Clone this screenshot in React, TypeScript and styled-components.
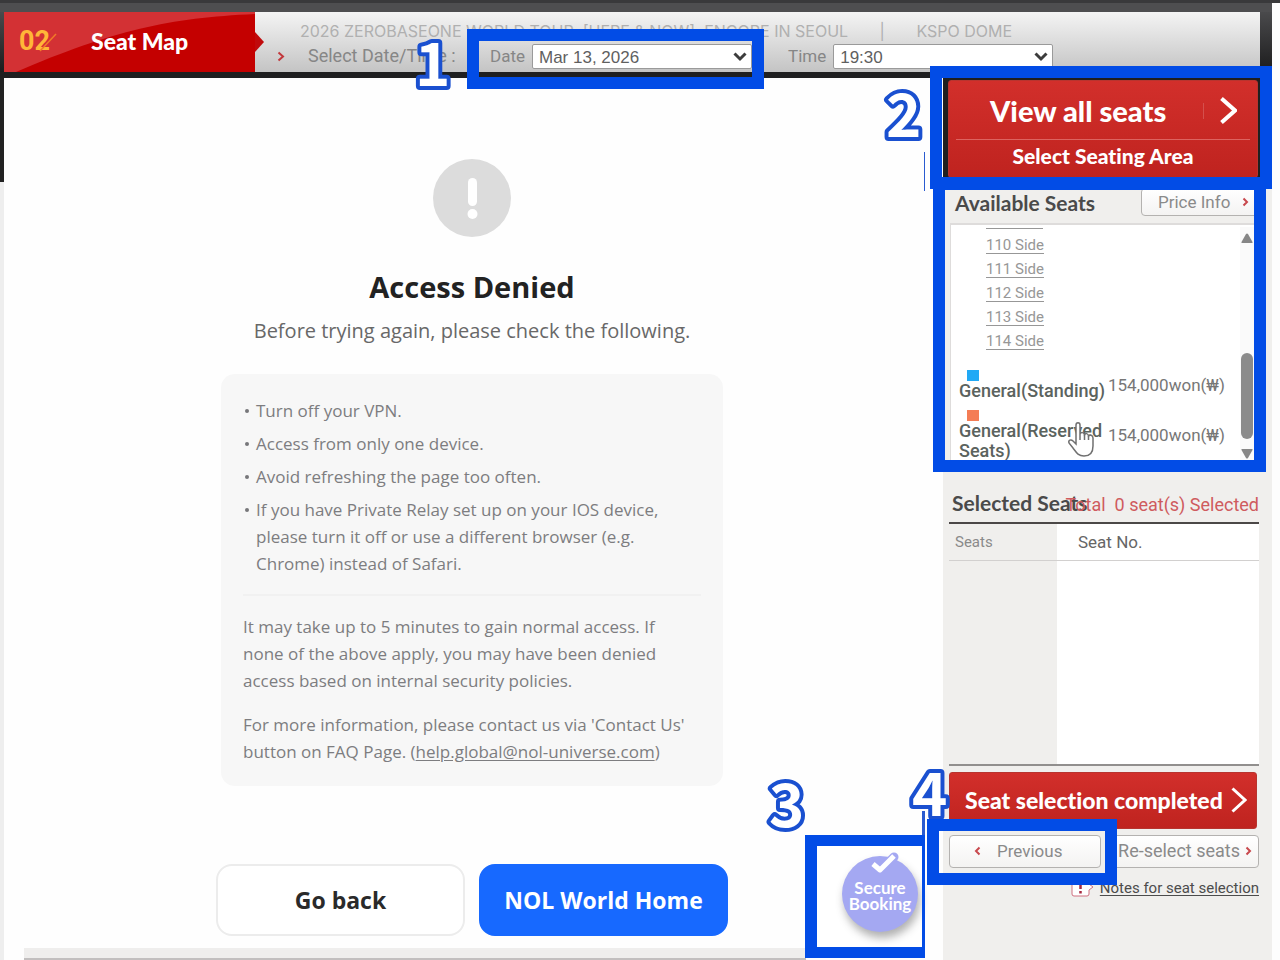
import React from 'react';
import styled, { createGlobalStyle } from 'styled-components';

const gothic = "Lato, 'Liberation Sans', sans-serif";
const ui = "Roboto, 'Noto Sans CJK KR', sans-serif";
const body = "'Open Sans', 'Noto Sans', sans-serif";
const markBlue = '#024ce6';

const GlobalStyle = createGlobalStyle`
  *, *::before, *::after { box-sizing: border-box; }
  body { margin: 0; background: #fdfdfd; font-family: ${ui}; font-variant-ligatures: none; }
  h1, h2, p, ul { margin: 0; padding: 0; }
  ul { list-style: none; }
  button { font: inherit; cursor: pointer; font-variant-ligatures: none; }
`;

/* ---------- page frame ---------- */

const Page = styled.div`
  display: flex;
  flex-direction: column;
  min-height: 100vh;
  border-top: 3px solid #39393b;
  padding-right: 8px;
  overflow: hidden;
`;

const TopStrip = styled.div`
  height: 9px;
  background: #4e4e50;
`;

const Header = styled.header`
  display: flex;
  height: 66px;
  padding: 0 12px 0 4px;
  border-bottom: 6px solid #1f1f20;
  background: linear-gradient(#4a4a4c, #1c1c1d);
`;

const Body = styled.div`
  display: flex;
  flex: 1;
  padding-left: 4px;
  background: linear-gradient(#222 104px, #eeeeee 104px);
`;

/* ---------- callouts drawn over the page ---------- */

const Target = styled.div`
  position: relative;
`;

const Frame = styled.div<{ $inset: string; $width?: string }>`
  position: absolute;
  inset: ${p => p.$inset};
  border: solid ${markBlue};
  border-width: ${p => p.$width ?? '12px'};
  pointer-events: none;
  z-index: 2;
`;

const MarkBox = styled.svg<{ $top: number; $left: number }>`
  position: absolute;
  top: ${p => p.$top}px;
  left: ${p => p.$left}px;
  width: 48px;
  height: 60px;
  z-index: 1;
  pointer-events: none;
  text {
    font: 700 60px 'Noto Sans CJK KR', sans-serif;
    fill: #fff;
    stroke: #1a50d0;
    stroke-width: 8px;
    stroke-linejoin: round;
    paint-order: stroke fill;
  }
`;

const Mark = ({ top, left, children }: { top: number; left: number; children: string }) => (
  <MarkBox $top={top} $left={left}>
    <text x="6" y="52">
      {children}
    </text>
  </MarkBox>
);

const Rule = styled.div<{ $top: number; $left: number; $width: number; $height: number }>`
  position: absolute;
  top: ${p => p.$top}px;
  left: ${p => p.$left}px;
  width: ${p => p.$width}px;
  height: ${p => p.$height}px;
  background: #2a5bd0;
`;

/* ---------- header ---------- */

const Step = styled.div`
  position: relative;
  display: flex;
  align-items: center;
  flex: 0 0 251px;
  padding: 0 0 2px 15px;
  background: #c40000;
  font-family: ${gothic};
  font-weight: 900;
`;

const Swoosh = styled.svg`
  position: absolute;
  inset: 0;
  width: 100%;
  height: 100%;
`;

const StepArrow = styled.svg`
  position: absolute;
  left: 100%;
  top: 20px;
  width: 9px;
  height: 20px;
`;

const StepNumber = styled.span`
  position: relative;
  width: 72px;
  font: 700 27px/30px ${ui};
  color: #ffb638;
`;

const StepSlash = styled.svg`
  position: absolute;
  left: 18px;
  top: 4px;
  width: 20px;
  height: 22px;
`;

const StepName = styled.span`
  position: relative;
  font-size: 23px;
  line-height: 30px;
  color: #fff;
`;

const Info = styled.div`
  flex: 1;
  min-width: 0;
  padding: 8px 0 0 22px;
  background: linear-gradient(#f4f4f4, #c4c4c4);
`;

const Show = styled.div`
  padding-left: 23px;
  font: 16px/22px Inter, ${ui};
  color: #b0b0b0;
  white-space: pre;
`;

const Pickers = styled.div`
  display: flex;
  align-items: center;
  height: 28px;
  font-size: 17px;
  line-height: 26px;
  color: #868686;
  white-space: nowrap;
`;

const PickerTitle = styled.span`
  width: 205px;
  padding-left: 23px;
  font-size: 18px;
`;

const Field = styled.div`
  position: relative;
  display: flex;
  align-items: center;
  gap: 7px;
  margin-right: 36px;
`;

const SelectBox = styled.div`
  position: relative;
  width: 220px;
  svg {
    position: absolute;
    right: 5px;
    top: 8px;
    pointer-events: none;
  }
`;

const Select = styled.select`
  display: block;
  appearance: none;
  width: 100%;
  height: 25px;
  padding: 2px 6px 0;
  border: 1px solid #9a9a9a;
  border-radius: 2px;
  background: #fff;
  font: 17px/22px 'Liberation Sans', sans-serif;
  color: #5f5f5f;
`;

/* ---------- access denied panel ---------- */

const Main = styled.main`
  position: relative;
  display: flex;
  flex: 1;
  flex-direction: column;
  align-items: center;
  min-width: 0;
  padding: 81px 3px 0 0;
  background: #fefefe;
  font-family: ${body};
`;

const Title = styled.h1`
  margin-top: 32px;
  font-size: 29px;
  line-height: 36px;
  font-weight: 700;
  color: #222;
`;

const Lead = styled.p`
  margin-top: 12px;
  font-size: 20px;
  line-height: 28px;
  color: #686868;
`;

const Card = styled.section`
  width: 100%;
  max-width: 502px;
  margin-top: 29px;
  padding: 23px 22px 21px;
  border-radius: 14px;
  background: #f7f7f7;
  font-size: 17px;
  line-height: 27px;
  color: #7d7d80;
`;

const Tips = styled.ul`
  display: flex;
  flex-direction: column;
  gap: 6px;
  padding-bottom: 17px;
  border-bottom: 2px solid #f1f1f1;
`;

const Tip = styled.li`
  display: flex;
  &::before {
    content: '';
    flex: none;
    width: 4px;
    height: 4px;
    margin: 12px 7px 0 2px;
    border-radius: 50%;
    background: #77777a;
  }
`;

const Note = styled.p`
  margin-top: 17px;
  padding-right: 12px;
`;

const MailLink = styled.a`
  color: inherit;
  text-underline-offset: 2px;
`;

const Actions = styled.div`
  display: flex;
  gap: 14px;
  width: 100%;
  max-width: 512px;
  margin-top: 78px;
`;

const ActionButton = styled.button<{ $primary?: boolean }>`
  flex: 1;
  height: 72px;
  border: 2px solid ${p => (p.$primary ? '#1769ff' : '#ececec')};
  border-radius: 16px;
  background: ${p => (p.$primary ? '#1769ff' : '#fff')};
  color: ${p => (p.$primary ? '#fff' : '#2a2a2a')};
  font-size: 23px;
  font-weight: 700;
`;

const FootStrip = styled.div`
  align-self: stretch;
  height: 12px;
  margin: auto 134px 0 20px;
  border-bottom: 2px solid #c2bfbf;
  background: #efeeed;
`;

const BadgeSpot = styled.div`
  position: absolute;
  right: 21px;
  bottom: 13px;
  display: flex;
  align-items: center;
  justify-content: center;
  width: 105px;
  height: 101px;
  padding: 0 0 5px 21px;
  background: #fff;
`;

const Badge = styled.button`
  position: relative;
  display: flex;
  flex-direction: column;
  align-items: center;
  width: 76px;
  height: 76px;
  padding: 24px 0 0;
  border: 0;
  border-radius: 50%;
  background: #a4a8f2;
  box-shadow: 2px 6px 8px rgba(60, 60, 60, 0.4);
  font: 700 17px/16px ${gothic};
  color: #fff;
  svg {
    position: absolute;
    left: 26px;
    top: -5px;
  }
`;

/* ---------- sidebar ---------- */

const Sidebar = styled.aside`
  flex: 0 0 329px;
  background: #f0efed;
`;

const ViewAllSpot = styled(Target)`
  height: 100px;
  margin-right: 12px;
  padding: 2px 2px 0 5px;
  background: #1f1f20;
`;

const redFace = `
  border: 1px solid #b8342f;
  border-radius: 3px;
  background: linear-gradient(#d22f2b, #bf231f);
  color: #fff;
  font-family: ${gothic};
  font-weight: 900;
`;

const ViewAll = styled.button`
  ${redFace}
  display: flex;
  flex-direction: column;
  width: 100%;
  height: 98px;
  padding: 0 7px;
`;

const ViewAllTop = styled.span`
  display: flex;
  align-items: center;
  width: 100%;
  height: 59px;
  padding: 0 13px 0 34px;
  border-bottom: 1px solid #dd6360;
  font-size: 29px;
`;

const Divider = styled.span`
  width: 1px;
  height: 16px;
  margin: 2px 16px 0 auto;
  background: #d4504d;
`;

const ViewAllSub = styled.span`
  width: 100%;
  font-size: 21px;
  line-height: 32px;
  text-align: center;
`;

const Available = styled(Target)`
  height: 287px;
`;

const SideHead = styled.div`
  display: flex;
  justify-content: space-between;
  height: 45px;
  padding: 10px 13px 0 12px;
`;

const SideTitle = styled.h2`
  font: 700 21px/30px ${gothic};
  color: #4a4a4a;
`;

const plainFace = `
  border: 1px solid #b4b2b0;
  border-radius: 4px;
  background: linear-gradient(#fff, #f4f3f2);
  color: #8a8a8a;
  font-family: ${ui};
`;

const PriceButton = styled.button`
  ${plainFace}
  display: flex;
  align-items: center;
  gap: 12px;
  width: 118px;
  height: 28px;
  padding: 0 0 0 16px;
  font-size: 17px;
`;

const SeatPanel = styled.div`
  display: flex;
  height: 242px;
  margin: 0 13px 0 7px;
  padding: 2px 5px 0 0;
  border: solid #dedcdb;
  border-width: 2px 0 0 1px;
  background: #fff;
`;

const SeatList = styled.div`
  display: flex;
  flex: 1;
  flex-direction: column;
  justify-content: flex-end;
  height: 238px;
  overflow: hidden;
`;

const BlockLinks = styled.ul`
  padding: 0 0 12px 35px;
  font-size: 15px;
  line-height: 24px;
  &::before {
    content: '';
    display: block;
    width: 57px;
    height: 1px;
    margin-bottom: 4px;
    background: #979797;
  }
  a {
    color: #979797;
    text-underline-offset: 3px;
  }
`;

const PriceTable = styled.table`
  width: 280px;
  margin-left: 8px;
  border-collapse: collapse;
  color: #6b6b6b;
  th, td {
    padding: 0 0 4px;
    text-align: left;
    vertical-align: middle;
  }
  th {
    width: 149px;
    font-weight: 500;
    font-size: 18px;
    line-height: 20px;
    color: #5b635e;
  }
  td {
    padding-top: 4px;
    font-size: 17px;
    line-height: 20px;
    color: #777;
  }
`;

const Swatch = styled.span<{ $color: string }>`
  display: block;
  width: 12px;
  height: 11px;
  margin: 5px 0 0 8px;
  background: ${p => p.$color};
`;

const ScrollTrack = styled.div`
  display: flex;
  flex-direction: column;
  align-items: center;
  justify-content: space-between;
  width: 14px;
  padding: 6px 0 6px;
  background: #fafafa;
`;

const ScrollThumb = styled.div`
  width: 12px;
  height: 86px;
  margin: auto 0 10px;
  border-radius: 6px;
  background: #8b8b8b;
`;

const Hand = styled.svg`
  position: absolute;
  left: 124px;
  top: 243px;
`;

const SelectedHead = styled.div`
  display: grid;
  padding: 23px 13px 0 9px;
  > * {
    grid-area: 1 / 1;
  }
`;

const Total = styled.p`
  justify-self: end;
  font-size: 18px;
  line-height: 34px;
  color: #cf5b5e;
  white-space: pre;
`;

const Block = styled.div`
  display: flex;
  flex-direction: column;
  padding: 0 13px 0 6px;
`;

const SeatTable = styled.table`
  width: 100%;
  border-collapse: separate;
  border-spacing: 0;
  border-top: 2px solid #4b4847;
  border-bottom: 2px solid #918f8e;
  th {
    height: 37px;
    padding: 0 0 0 21px;
    border-bottom: 1px solid #d2d0cf;
    font-size: 17px;
    font-weight: 400;
    text-align: left;
    color: #666;
  }
  th:first-child {
    width: 108px;
    padding-left: 6px;
    font-size: 15px;
    color: #8a8a8a;
  }
  td {
    height: 203px;
  }
  td:last-child, th:last-child {
    background: #fff;
  }
`;

const DoneButton = styled.button`
  ${redFace}
  display: flex;
  align-items: center;
  justify-content: space-between;
  height: 57px;
  margin: 6px 2px 0 0;
  padding: 0 9px 2px 15px;
  font-size: 23px;
  white-space: nowrap;
`;

const StepButtons = styled.div`
  display: flex;
  gap: 6px;
  margin-top: 6px;
`;

const Half = styled(Target)`
  flex: 1;
`;

const NavButton = styled.button<{ $end?: boolean }>`
  ${plainFace}
  display: flex;
  align-items: center;
  justify-content: ${p => (p.$end ? 'flex-end' : 'flex-start')};
  gap: ${p => (p.$end ? 5 : 16)}px;
  width: 100%;
  height: 33px;
  padding: 0 ${p => (p.$end ? 6 : 0)}px 2px ${p => (p.$end ? 0 : 24)}px;
  font-size: ${p => (p.$end ? 18 : 17)}px;
  white-space: nowrap;
`;

const NotesLink = styled.a`
  display: flex;
  align-items: center;
  align-self: flex-end;
  gap: 6px;
  margin-top: 10px;
  font-size: 15px;
  line-height: 20px;
  color: #4c4c4c;
  text-underline-offset: 2px;
`;

/* ---------- small drawings ---------- */

const Chevron = ({ w, h, color, stroke, back }: { w: number; h: number; color: string; stroke: number; back?: boolean }) => (
  <svg width={w} height={h} viewBox={`0 0 ${w} ${h}`} fill="none" stroke={color} strokeWidth={stroke} aria-hidden>
    <path d={back ? `M${w - 1.5} 1.5L2 ${h / 2}L${w - 1.5} ${h - 1.5}` : `M1.5 1.5L${w - 2} ${h / 2}L1.5 ${h - 1.5}`} />
  </svg>
);

const DropArrow = () => (
  <svg width="14" height="10" viewBox="0 0 14 10" fill="none" stroke="#3c3c3c" strokeWidth="3" aria-hidden>
    <path d="M1.5 1.5L7 7L12.5 1.5" />
  </svg>
);

const Triangle = ({ down }: { down?: boolean }) => (
  <svg width="12" height="10" viewBox="0 0 12 10" fill="#868686" aria-hidden>
    <path d={down ? 'M1 0H11Q12 0 11.5 1L7 9Q6 10 5 9L.5 1Q0 0 1 0Z' : 'M1 10H11Q12 10 11.5 9L7 1Q6 0 5 1L.5 9Q0 10 1 10Z'} />
  </svg>
);

const blocks = ['110 Side', '111 Side', '112 Side', '113 Side', '114 Side'];
const prices = [
  { name: 'General(Standing)', price: '154,000won(₩)', color: '#21a9f5' },
  { name: 'General(Reserved Seats)', price: '154,000won(₩)', color: '#f47d55' },
];
const tips = [
  'Turn off your VPN.',
  'Access from only one device.',
  'Avoid refreshing the page too often.',
  'If you have Private Relay set up on your IOS device, please turn it off or use a different browser (e.g. Chrome) instead of Safari.',
];

export default function App() {
  return (
    <Page>
      <GlobalStyle />
      <TopStrip />
      <Header>
        <Step>
          <Swoosh viewBox="0 0 251 60" preserveAspectRatio="none" aria-hidden>
            <path d="M0 0H251V2C165 6 110 18 12 60H0Z" fill="#d33134" />
          </Swoosh>
          <StepNumber>
            02
            <StepSlash viewBox="0 0 20 22" fill="none" aria-hidden>
              <path d="M19 4L3 21" stroke="#f07a28" strokeWidth="1.5" />
            </StepSlash>
          </StepNumber>
          <StepName>Seat Map</StepName>
          <StepArrow viewBox="0 0 9 20" aria-hidden>
            <path d="M0 0L9 10L0 20Z" fill="#c00a0c" />
          </StepArrow>
        </Step>
        <Info>
          <Show>{'2026 ZEROBASEONE WORLD TOUR  [HERE & NOW]  ENCORE IN SEOUL       |       KSPO DOME'}</Show>
          <Pickers>
            <Chevron w={8} h={11} color="#c2383c" stroke={2} />
            <PickerTitle>Select Date/Time :</PickerTitle>
            <Field>
              <label htmlFor="date">Date</label>
              <SelectBox>
                <Select id="date" defaultValue="d">
                  <option value="d">Mar 13, 2026</option>
                </Select>
                <DropArrow />
              </SelectBox>
              <Mark top={-9} left={-81}>1</Mark>
              <Frame $inset="-14px -12px -20px -23px" />
            </Field>
            <Field>
              <label htmlFor="time">Time</label>
              <SelectBox>
                <Select id="time" defaultValue="t">
                  <option value="t">19:30</option>
                </Select>
                <DropArrow />
              </SelectBox>
            </Field>
          </Pickers>
        </Info>
      </Header>

      <Body>
        <Main>
          <svg width="78" height="78" viewBox="0 0 78 78" aria-hidden>
            <circle cx="39" cy="39" r="39" fill="#dcdcdc" />
            <rect x="35" y="19" width="9" height="28" rx="4.5" fill="#fff" />
            <circle cx="39.5" cy="55" r="5" fill="#fff" />
          </svg>
          <Title>Access Denied</Title>
          <Lead>Before trying again, please check the following.</Lead>
          <Card>
            <Tips>
              {tips.map(t => (
                <Tip key={t}>{t}</Tip>
              ))}
            </Tips>
            <Note>
              It may take up to 5 minutes to gain normal access. If none of the above apply, you may have been denied access
              based on internal security policies.
            </Note>
            <Note>
              For more information, please contact us via 'Contact Us' button on FAQ Page. (
              <MailLink href="mailto:help.global@nol-universe.com">help.global@nol-universe.com</MailLink>)
            </Note>
          </Card>
          <Actions>
            <ActionButton>Go back</ActionButton>
            <ActionButton $primary>NOL World Home</ActionButton>
          </Actions>
          <FootStrip />
          <BadgeSpot>
            <Badge>
              <svg width="32" height="26" viewBox="0 0 32 26" fill="none" strokeLinejoin="round" aria-hidden>
                <path d="M5 14L12 20L26 6" stroke="#a4a8f2" strokeWidth="9" strokeLinecap="round" />
                <path d="M5 13L12 19L26 5" stroke="#fff" strokeWidth="5" />
              </svg>
              <span>Secure</span>
              <span>Booking</span>
            </Badge>
            <Mark top={-71} left={-54}>3</Mark>
            <Rule $top={-35} $left={105} $width={3} $height={24} />
            <Frame $inset="-11px -3px -11px -12px" $width="11px 3px 11px 12px" />
          </BadgeSpot>
        </Main>

        <Sidebar>
          <ViewAllSpot>
            <ViewAll>
              <ViewAllTop>
                View all seats
                <Divider />
                <Chevron w={17} h={27} color="#fff" stroke={4} />
              </ViewAllTop>
              <ViewAllSub>Select Seating Area</ViewAllSub>
            </ViewAll>
            <Mark top={7} left={-63}>2</Mark>
            <Rule $top={74} $left={-19} $width={1} $height={39} />
            <Frame $inset="-12px -12px -11px -13px" />
          </ViewAllSpot>

          <Available>
            <SideHead>
              <SideTitle>Available Seats</SideTitle>
              <PriceButton>
                Price Info
                <Chevron w={7} h={10} color="#c8484d" stroke={2} />
              </PriceButton>
            </SideHead>
            <SeatPanel>
              <SeatList>
                <BlockLinks>
                  {blocks.map(b => (
                    <li key={b}>
                      <a href={`#${b.slice(0, 3)}`}>{b}</a>
                    </li>
                  ))}
                </BlockLinks>
                <PriceTable>
                  <tbody>
                    {prices.map(p => (
                      <tr key={p.name}>
                        <th scope="row">
                          <Swatch $color={p.color} />
                          {p.name}
                        </th>
                        <td>{p.price}</td>
                      </tr>
                    ))}
                  </tbody>
                </PriceTable>
              </SeatList>
              <ScrollTrack>
                <Triangle />
                <ScrollThumb />
                <Triangle down />
              </ScrollTrack>
            </SeatPanel>
            <Hand width="30" height="38" viewBox="0 0 30 38" aria-hidden>
              <path
                d="M9 4C9 1 13 1 13 4V13C14 11 17 11 17.5 14C18.5 12 21 12 21.5 15C22.5 13.5 26 14 26 17V25C26 31 23 35 17 35C11 35 9 31 6 27L2 22C1 19 4 18 6 20L9 23Z"
                fill="#fff"
                stroke="#707070"
                strokeWidth="1.5"
              />
              <path d="M13 13V19M17.5 14V19M21.5 15V19" stroke="#707070" strokeWidth="1.5" />
            </Hand>
            <Frame $inset="0 6px -7px -10px" />
          </Available>

          <SelectedHead>
            <SideTitle>Selected Seats</SideTitle>
            <Total>{'Total  0 seat(s) Selected'}</Total>
          </SelectedHead>
          <Block>
            <SeatTable>
              <thead>
                <tr>
                  <th scope="col">Seats</th>
                  <th scope="col">Seat No.</th>
                </tr>
              </thead>
              <tbody>
                <tr>
                  <td />
                  <td />
                </tr>
              </tbody>
            </SeatTable>
            <DoneButton>
              Seat selection completed
              <Chevron w={16} h={26} color="#fff" stroke={3} />
            </DoneButton>
            <StepButtons>
              <Half>
                <NavButton>
                  <Chevron w={7} h={10} color="#c8484d" stroke={2} back />
                  Previous
                </NavButton>
                <Mark top={-71} left={-43}>4</Mark>
                <Frame $inset="-16px -16px -17px -22px" />
              </Half>
              <Half>
                <NavButton $end>
                  Re-select seats
                  <Chevron w={7} h={10} color="#c8484d" stroke={2} />
                </NavButton>
              </Half>
            </StepButtons>
            <NotesLink href="#notes">
              <svg width="23" height="20" viewBox="0 0 23 20" aria-hidden>
                <path d="M3 1H16Q18 1 18 3V6L22 9L18 12V16Q18 18 16 18H3Q1 18 1 16V3Q1 1 3 1Z" fill="#fff" stroke="#cf7080" />
                <path d="M9.5 4V11M9.5 13V15.5" stroke="#a82a40" strokeWidth="2.5" />
              </svg>
              Notes for seat selection
            </NotesLink>
          </Block>
        </Sidebar>
      </Body>
    </Page>
  );
}
